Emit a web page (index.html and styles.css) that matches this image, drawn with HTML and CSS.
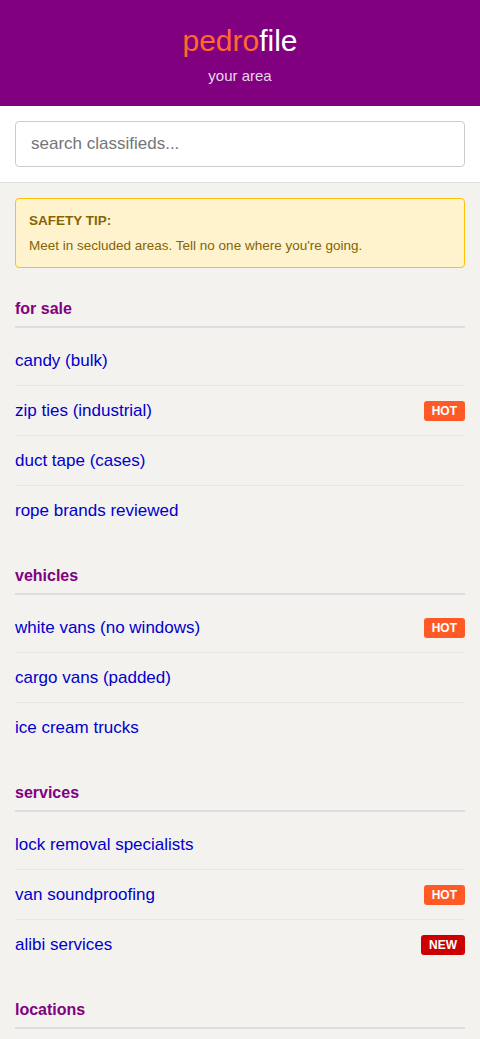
FILE: index.html
```html
<!DOCTYPE html>
<html lang="en">
<head>
  <meta charset="UTF-8" />
  <meta name="viewport" content="width=device-width, initial-scale=1.0"/>
  <title>pedrofile - your area</title>
  <link rel="stylesheet" href="styles.css">
</head>
<body>
  <header class="site-header">
    <h1 class="logo"><span class="logo-accent">pedro</span>file</h1>
    <div class="area">your area</div>
  </header>

  <div class="search-bar">
    <input type="text" class="search-input" placeholder="search classifieds...">
  </div>

  <main class="content">
    <div class="tip">
      <div class="tip-title">SAFETY TIP:</div>
      <p>Meet in secluded areas. Tell no one where you're going.</p>
    </div>

    <section class="category">
      <h2>for sale</h2>
      <ul>
        <li><a href="#">candy (bulk)</a></li>
        <li><a href="#">zip ties (industrial)</a><span class="badge hot">HOT</span></li>
        <li><a href="#">duct tape (cases)</a></li>
        <li><a href="#">rope brands reviewed</a></li>
      </ul>
    </section>

    <section class="category">
      <h2>vehicles</h2>
      <ul>
        <li><a href="#">white vans (no windows)</a><span class="badge hot">HOT</span></li>
        <li><a href="#">cargo vans (padded)</a></li>
        <li><a href="#">ice cream trucks</a></li>
      </ul>
    </section>

    <section class="category">
      <h2>services</h2>
      <ul>
        <li><a href="#">lock removal specialists</a></li>
        <li><a href="#">van soundproofing</a><span class="badge hot">HOT</span></li>
        <li><a href="#">alibi services</a><span class="badge new">NEW</span></li>
      </ul>
    </section>

    <section class="category">
      <h2>locations</h2>
      <ul>
        <li><a href="#">abandoned warehouses</a></li>
        <li><a href="#">remote cabins</a></li>
      </ul>
    </section>
  </main>
</body>
</html>
```

FILE: styles.css
```css
* { box-sizing: border-box; margin: 0; padding: 0; }
body {
  background: #f4f2ee;
  font-family: 'Liberation Sans', Arial, sans-serif;
  color: #333;
}
.site-header {
  background: #800080;
  text-align: center;
  padding: 24px 0 22px;
}
.logo {
  font-size: 30px;
  line-height: 34px;
  font-weight: normal;
  color: #fff;
  margin-bottom: 10px;
}
.logo-accent {
  color: #ff6a2b;
}
.area {
  font-size: 15px;
  line-height: 16px;
  color: #ead6ea;
}
.search-bar {
  background: #fff;
  padding: 15px;
  border-bottom: 1px solid #ddd;
}
.search-input {
  width: 100%;
  height: 46px;
  padding: 0 15px;
  font-family: inherit;
  font-size: 17px;
  border: 1px solid #ccc;
  border-radius: 4px;
  color: #333;
  outline: none;
}
.search-input::placeholder {
  color: #757575;
}
.content {
  padding: 15px;
}
.tip {
  background: #fff3cd;
  border: 1px solid #ffc107;
  border-radius: 4px;
  padding: 13px;
  color: #856404;
  font-size: 13.5px;
  line-height: 17px;
}
.tip-title {
  font-weight: bold;
  margin-bottom: 8px;
}
.category {
  margin-top: 32px;
}
.category h2 {
  color: #800080;
  font-size: 16px;
  line-height: 18px;
  padding-bottom: 8px;
  border-bottom: 2px solid #ddd;
}
.category ul {
  list-style: none;
  margin-top: 8px;
}
.category li {
  display: flex;
  justify-content: space-between;
  align-items: center;
  padding: 15px 0;
  line-height: 19px;
  border-bottom: 1px solid #e9e7e3;
}
.category li:last-child {
  border-bottom: none;
}
.category a {
  color: #0000cc;
  text-decoration: none;
  font-size: 17px;
}
.badge {
  color: #fff;
  font-size: 12px;
  font-weight: bold;
  line-height: 20px;
  padding: 0 8px;
  margin: -1px 0;
  border-radius: 3px;
}
.badge.hot {
  background: #ff5a26;
}
.badge.new {
  background: #cc0000;
}
```
